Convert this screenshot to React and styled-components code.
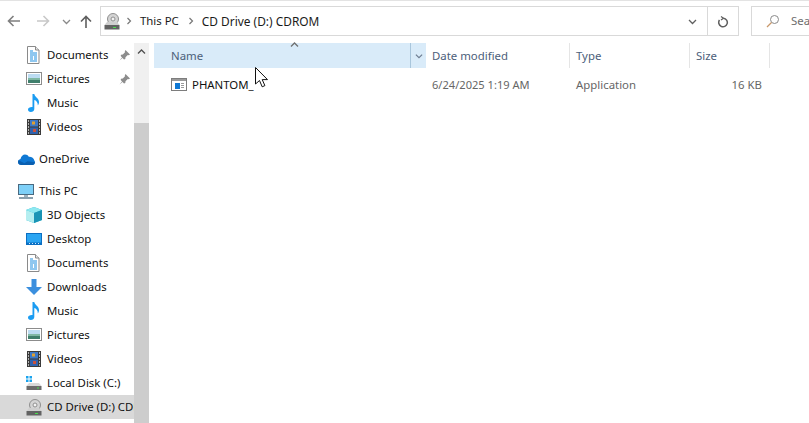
import React from "react";
import styled, { createGlobalStyle } from "styled-components";

const GlobalStyle = createGlobalStyle`
  html, body { margin: 0; padding: 0; background: #fff; }
  body { font-family: "Noto Sans", "Open Sans", sans-serif; font-size: 11.4px; line-height: 14px; overflow: hidden; }
  svg { flex: none; }
`;

const DocIcon = () => (
  <svg width="16" height="18" viewBox="0 0 16 18">
    <path d="M1.500 .5h8l3.500 3.500v13.500H1.500z" fill="#fff" stroke="#8a8a8a" />
    <path d="M9.500 .5v3.500h3.500" fill="#e6e6e6" stroke="#8a8a8a" />
    <path d="M4 5h3M4 7h7M4 9h7M4 11h3M8 11h3M4 13h3M8 13h3M4 15h7" stroke="#1f8fe0" />
  </svg>
);
const PictureIcon = () => (
  <svg width="16" height="14" viewBox="0 0 16 14">
    <rect x=".5" y=".5" width="15" height="12" fill="#fff" stroke="#8c8c8c" />
    <rect x="2" y="2" width="12" height="4" fill="#bcdcf2" />
    <rect x="2" y="6" width="12" height="2" fill="#7fb8a4" />
    <rect x="2" y="8" width="12" height="3" fill="#3f7f6c" />
  </svg>
);
const MusicIcon = () => (
  <svg width="12" height="18" viewBox="0 0 12 18">
    <path d="M4.500 0h1.800c.3 3 4.700 4 4.700 8 0 1.500-.5 2.500-1.200 3.300.2-3-1.700-4.800-3.500-5.300v9c0 1.800-1.700 3-3.500 3S0 17 0 15.500 1.800 12.800 4.500 13z" fill="#1b9cf2" />
  </svg>
);
const VideoIcon = () => (
  <svg width="14" height="16" viewBox="0 0 14 16">
    <rect width="14" height="16" fill="#3a3a3a" />
    <rect x="3" y="1" width="8" height="6.500" fill="#3c78c8" />
    <rect x="3" y="8.500" width="8" height="6.500" fill="#2f62ad" />
    <rect x="5" y="2.500" width="3" height="3" fill="#e0a030" />
    <rect x="6" y="10" width="3" height="3" fill="#c9503c" />
    <path d="M1 2h1M1 5h1M1 8h1M1 11h1M1 14h1M12 2h1M12 5h1M12 8h1M12 11h1M12 14h1" stroke="#ddd" strokeWidth="1.400" />
  </svg>
);
const CloudIcon = () => (
  <svg width="17" height="11" viewBox="0 0 17 11">
    <path d="M3.500 11C1.500 11 0 9.700 0 8c0-1.500 1-2.700 2.500-3C3.200 2 5 .5 7 .5c1.700 0 3 .8 3.800 2.200C13.500 2.500 16 4 16.300 6.500c.5.500.7 1.200.7 1.800 0 1.500-1.200 2.700-2.700 2.700z" fill="#0f78d4" />
    <path d="M3.500 11C1.500 11 0 9.700 0 8c0-.6.200-1.200.5-1.700l6 3 3-2 7.400 1c0 1.500-1.200 2.700-2.600 2.700z" fill="#0a5fb0" />
  </svg>
);
const PcIcon = () => (
  <svg width="16" height="15" viewBox="0 0 16 15">
    <rect x=".5" y=".5" width="15" height="10" fill="#7ed0f8" stroke="#4a6a80" />
    <rect x="6" y="11" width="4" height="2" fill="#9fb4c0" />
    <rect x="1" y="13" width="14" height="2" fill="#8aa0ae" />
  </svg>
);
const CubeIcon = () => (
  <svg width="16" height="16" viewBox="0 0 16 16">
    <path d="M8 0l8 3v10l-8 3-8-3V3z" fill="#2bb7cf" />
    <path d="M8 0l8 3-8 3-8-3z" fill="#8ee8f0" />
    <path d="M0 3l8 3v10l-8-3z" fill="#b5eef0" />
    <path d="M8 6l8-3v10l-8 3z" fill="#1a94b5" />
  </svg>
);
const DesktopIcon = () => (
  <svg width="16" height="12" viewBox="0 0 16 12">
    <rect width="16" height="12" fill="#0b6fc2" />
    <rect x="1" y="1" width="14" height="8.500" fill="#2aa5f2" />
    <path d="M3 10.500h1M6 10.500h1M9 10.500h1M12 10.500h1" stroke="#cfeaff" />
  </svg>
);
const DownloadIcon = () => (
  <svg width="16" height="16" viewBox="0 0 16 16">
    <path d="M5.500 0h5v8H16l-8 8-8-8h5.500z" fill="#3b8fde" />
  </svg>
);
const DiskCIcon = () => (
  <svg width="16" height="14" viewBox="0 0 16 14">
    <path d="M0 0h2.500v2.500H0zM3.500 0H6v2.500H3.500zM0 3.500h2.500V6H0zM3.500 3.500H6V6H3.500z" fill="#19a3ee" />
    <path d="M3 7h10l2.500 3H.5z" fill="#d8d8d8" />
    <rect x=".5" y="10" width="15" height="4" fill="#6b6b6b" />
    <rect x="11" y="11.500" width="2" height="1" fill="#45e04a" />
  </svg>
);
const CdIcon = () => (
  <svg width="16" height="17" viewBox="0 0 16 17">
    <circle cx="9" cy="6" r="5.500" fill="#d4d4d4" stroke="#8f8f8f" />
    <circle cx="9" cy="6" r="2" fill="#f2f2f2" stroke="#8f8f8f" />
    <path d="M3 9h10l2.500 3H.5z" fill="#cfcfcf" />
    <rect x=".5" y="12" width="15" height="4.500" fill="#626262" />
    <rect x="9" y="14" width="3" height="1" fill="#45e04a" />
  </svg>
);
const AppIcon = () => (
  <svg width="16" height="13" viewBox="0 0 16 13">
    <rect x=".5" y=".5" width="15" height="12" fill="#fff" stroke="#7d7d7d" />
    <rect x="1" y="1" width="14" height="2" fill="#9a9a9a" />
    <rect x="4" y="5" width="5" height="6" fill="#0f78d4" />
    <path d="M10 5.500h3M10 7.500h3M10 9.500h3" stroke="#9a9a9a" />
  </svg>
);
const PinIcon = () => (
  <svg width="11" height="11" viewBox="0 0 11 11">
    <path d="M6.500 0L11 4.500 9.800 5.200 8.800 5 6.500 7.300 6.300 9 5 9.500 1.700 6 2 4.800 3.800 4.500 6 2.200 5.800 1.200zM3 7.500L.5 10.500 3.500 8z" fill="#8d8d8d" />
  </svg>
);
const Chevron = ({ up, color = "#606060", size = 9 }) => (
  <svg width={size} height={size} viewBox="0 0 9 9">
    <path d={up ? "M1 6.500l3.500-3.500 3.500 3.500" : "M1 3l3.500 3.500L8 3"} fill="none" stroke={color} strokeWidth="1.300" />
  </svg>
);
const Arrow = ({ dir, color }) => (
  <svg width="13" height="12" viewBox="0 0 13 12">
    <path d={dir === "left" ? "M13 6H1.500M6.500 1L1.500 6l5 5" : "M0 6h11.500M6.500 1l5 5-5 5"} fill="none" stroke={color} strokeWidth="1.600" />
  </svg>
);
const UpArrow = () => (
  <svg width="12" height="13" viewBox="0 0 12 13">
    <path d="M6 13V1.500M1 6.500l5-5 5 5" fill="none" stroke="#5f5f5f" strokeWidth="1.600" />
  </svg>
);
const Crumb = () => (
  <svg width="6" height="8" viewBox="0 0 6 8">
    <path d="M1.500 1l3 3-3 3" fill="none" stroke="#777" strokeWidth="1.200" />
  </svg>
);
const RefreshIcon = () => (
  <svg width="12" height="13" viewBox="0 0 12 13">
    <path d="M4 1.500l2.500 1.700L4 5" fill="none" stroke="#5f5f5f" strokeWidth="1.200" />
    <path d="M6.500 3.200A4.300 4.300 0 1 1 2.500 5" fill="none" stroke="#5f5f5f" strokeWidth="1.500" />
  </svg>
);
const SearchIcon = () => (
  <svg width="14" height="14" viewBox="0 0 14 14">
    <circle cx="8.500" cy="5.500" r="4" fill="none" stroke="#8a8a8a" />
    <path d="M5.500 8.500L1 13" stroke="#c9986a" strokeWidth="1.300" />
  </svg>
);
const Cursor = () => (
  <svg width="14" height="21" viewBox="0 0 14 21">
    <path d="M.5.5v16.500l4-3.500 2.700 6.300 2.700-1.200-2.700-6h5.300z" fill="#fff" stroke="#111" />
  </svg>
);

const Window = styled.div`
  width: 809px;
  height: 423px;
  overflow: hidden;
  position: relative;
  background: #fff;
  color: #111;
  border-top: 1px solid #e3e3e3;
  box-sizing: border-box;
  display: flex;
  flex-direction: column;
`;
const Toolbar = styled.div`
  height: 42px;
  flex: none;
  display: flex;
  align-items: flex-start;
  padding-top: 5px;
  box-sizing: border-box;
`;
const NavButtons = styled.div`
  width: 100px;
  height: 30px;
  flex: none;
  display: flex;
  align-items: center;
`;
const NavSlot = styled.span`
  display: flex;
  align-items: center;
  justify-content: center;
  width: ${(p) => p.$w}px;
  flex: none;
`;
const AddressBar = styled.div`
  width: 639px;
  height: 30px;
  flex: none;
  border: 1px solid #d9d9d9;
  box-sizing: border-box;
  display: flex;
  align-items: center;
`;
const AddressPath = styled.div`
  flex: 1;
  display: flex;
  align-items: center;
  padding-left: 3px;
  color: #1a1a1a;
  white-space: nowrap;
`;
const CrumbSlot = styled.span`
  display: flex;
  margin: 0 8px 0 ${(p) => p.$left}px;
`;
const CurrentCrumb = styled.span`
  font-size: 11.9px;
`;
const AddressEnd = styled.div`
  width: 30px;
  height: 100%;
  display: flex;
  align-items: center;
  justify-content: center;
`;
const RefreshBox = styled(AddressEnd)`
  border-left: 1px solid #d9d9d9;
`;
const SearchBox = styled.div`
  margin-left: 12px;
  width: 80px;
  height: 30px;
  flex: none;
  border: 1px solid #d9d9d9;
  border-right: none;
  box-sizing: border-box;
  display: flex;
  align-items: center;
  padding-left: 14px;
  gap: 11px;
  color: #6d6d6d;
  white-space: nowrap;
  overflow: hidden;
`;
const Body = styled.div`
  flex: 1;
  display: flex;
  min-height: 0;
`;
const Sidebar = styled.div`
  width: 134px;
  flex: none;
  overflow: hidden;
`;
const NavRow = styled.div`
  height: 24px;
  display: flex;
  align-items: center;
  padding-left: ${(p) => p.$indent}px;
  margin-top: ${(p) => (p.$gap ? 8 : 0)}px;
  background: ${(p) => (p.$active ? "#d9d9d9" : "transparent")};
  white-space: nowrap;
  position: relative;
`;
const NavIcon = styled.span`
  width: 20px;
  flex: none;
  margin-right: 3px;
  display: flex;
  align-items: center;
  justify-content: center;
`;
const Pin = styled.span`
  position: absolute;
  left: 119px;
  top: 7px;
  display: flex;
`;
const Scrollbar = styled.div`
  width: 15px;
  flex: none;
  background: #f0f0f0;
  display: flex;
  flex-direction: column;
`;
const ScrollButton = styled.div`
  height: 17px;
  display: flex;
  align-items: center;
  justify-content: center;
  background: #f0f0f0;
`;
const ScrollTrack = styled.div`
  height: 63px;
  flex: none;
`;
const ScrollThumb = styled.div`
  flex: 1;
  background: #cdcdcd;
`;
const Content = styled.div`
  flex: 1;
  padding-left: 5px;
`;
const HeaderRow = styled.div`
  height: 25px;
  display: flex;
  color: #4c607a;
`;
const HeaderCell = styled.div`
  width: ${(p) => p.$w}px;
  flex: none;
  box-sizing: border-box;
  display: flex;
  align-items: center;
  padding-left: ${(p) => p.$pad}px;
  border-right: 1px solid #e5e5e5;
`;
const NameHeader = styled(HeaderCell)`
  background: #d9ebf9;
  border-right: none;
  position: relative;
`;
const SortCaret = styled.span`
  position: absolute;
  left: 136px;
  top: -3px;
  display: flex;
`;
const DropCell = styled.span`
  position: absolute;
  right: 0;
  top: 0;
  bottom: 0;
  width: 15px;
  border-left: 1px solid #a9c6dc;
  display: flex;
  align-items: center;
  justify-content: center;
`;
const FileRow = styled.div`
  height: 24px;
  margin-top: 5px;
  display: flex;
  align-items: center;
  color: #666;
`;
const FileName = styled.div`
  width: 272px;
  flex: none;
  display: flex;
  align-items: center;
  padding-left: 17px;
  gap: 5px;
  box-sizing: border-box;
  color: #111;
`;
const FileIcon = styled.span`
  display: flex;
  margin-bottom: 2px;
`;
const FileCell = styled.div`
  width: ${(p) => p.$w}px;
  flex: none;
  box-sizing: border-box;
  padding-left: ${(p) => p.$pad || 0}px;
  text-align: ${(p) => p.$align || "left"};
`;
const DateText = styled.span`
  font-size: 11.1px;
`;
const CursorLayer = styled.div`
  position: absolute;
  left: 255px;
  top: 66px;
  display: flex;
`;

const navItems = [
  { label: "Documents", icon: <DocIcon />, pin: true },
  { label: "Pictures", icon: <PictureIcon />, pin: true },
  { label: "Music", icon: <MusicIcon /> },
  { label: "Videos", icon: <VideoIcon /> },
  { label: "OneDrive", icon: <CloudIcon />, indent: 16, gap: true },
  { label: "This PC", icon: <PcIcon />, indent: 16, gap: true },
  { label: "3D Objects", icon: <CubeIcon /> },
  { label: "Desktop", icon: <DesktopIcon /> },
  { label: "Documents", icon: <DocIcon /> },
  { label: "Downloads", icon: <DownloadIcon /> },
  { label: "Music", icon: <MusicIcon /> },
  { label: "Pictures", icon: <PictureIcon /> },
  { label: "Videos", icon: <VideoIcon /> },
  { label: "Local Disk (C:)", icon: <DiskCIcon /> },
  { label: "CD Drive (D:) CDROM", icon: <CdIcon />, active: true },
];

export default function App() {
  return (
    <Window>
      <GlobalStyle />
      <Toolbar>
        <NavButtons>
          <NavSlot $w={26}><Arrow dir="left" color="#7f7f7f" /></NavSlot>
          <NavSlot $w={34}><Arrow dir="right" color="#c8c8c8" /></NavSlot>
          <NavSlot $w={12}><Chevron color="#8a8a8a" /></NavSlot>
          <NavSlot $w={28}><UpArrow /></NavSlot>
        </NavButtons>
        <AddressBar>
          <AddressPath>
            <CdIcon />
            <CrumbSlot $left={6}><Crumb /></CrumbSlot>
            <span>This PC</span>
            <CrumbSlot $left={9}><Crumb /></CrumbSlot>
            <CurrentCrumb>CD Drive (D:) CDROM</CurrentCrumb>
          </AddressPath>
          <AddressEnd><Chevron /></AddressEnd>
          <RefreshBox><RefreshIcon /></RefreshBox>
        </AddressBar>
        <SearchBox>
          <SearchIcon />
          <span>Search CD</span>
        </SearchBox>
      </Toolbar>
      <Body>
        <Sidebar>
          {navItems.map((item, i) => (
            <NavRow key={i} $indent={item.indent || 24} $gap={item.gap} $active={item.active}>
              <NavIcon>{item.icon}</NavIcon>
              {item.label}
              {item.pin && <Pin><PinIcon /></Pin>}
            </NavRow>
          ))}
        </Sidebar>
        <Scrollbar>
          <ScrollButton><Chevron up color="#505050" /></ScrollButton>
          <ScrollTrack />
          <ScrollThumb />
        </Scrollbar>
        <Content>
          <HeaderRow>
            <NameHeader $w={272} $pad={17}>
              Name
              <SortCaret><Chevron up color="#707070" /></SortCaret>
              <DropCell><Chevron color="#6c7c90" size={8} /></DropCell>
            </NameHeader>
            <HeaderCell $w={144} $pad={6}>Date modified</HeaderCell>
            <HeaderCell $w={120} $pad={6}>Type</HeaderCell>
            <HeaderCell $w={80} $pad={6}>Size</HeaderCell>
          </HeaderRow>
          <FileRow>
            <FileName><FileIcon><AppIcon /></FileIcon>PHANTOM_</FileName>
            <FileCell $w={144} $pad={6}><DateText>6/24/2025 1:19 AM</DateText></FileCell>
            <FileCell $w={120} $pad={6}>Application</FileCell>
            <FileCell $w={72} $align="right">16 KB</FileCell>
          </FileRow>
        </Content>
      </Body>
      <CursorLayer><Cursor /></CursorLayer>
    </Window>
  );
}
